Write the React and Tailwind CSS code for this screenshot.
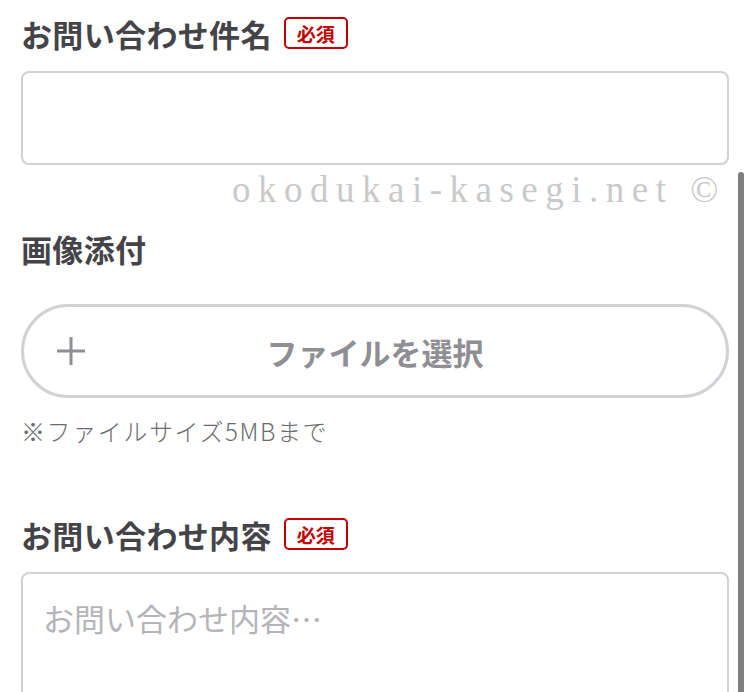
import React from 'react';

const jp = { fontFamily: '"Noto Sans CJK JP", "Noto Sans", sans-serif' };

function Required() {
  return (
    <span className="ml-[12px] flex h-[32px] w-[64px] items-center justify-center rounded-[5px] border-2 border-[#c40000] text-[19px] font-bold leading-none text-[#c40000]">
      必須
    </span>
  );
}

function Label({ children, required }) {
  return (
    <div className="flex h-[32px] items-center">
      <span className="text-[31px] font-bold leading-none tracking-[0.35px] text-[#444448]">{children}</span>
      {required && <Required />}
    </div>
  );
}

export default function App() {
  return (
    <div className="relative h-[692px] w-full overflow-hidden bg-white" style={jp}>
      <div className="flex flex-col pl-[21px] pr-[24px] pt-[17px]">
        {/* 件名 */}
        <Label required>お問い合わせ件名</Label>
        <input
          type="text"
          className="mt-[22px] h-[94px] w-full rounded-[8px] border-2 border-[#d1d1d6] bg-white outline-none"
        />

        {/* 画像添付 */}
        <div className="mt-[67px]">
          <Label>画像添付</Label>
        </div>
        <button className="relative mt-[40px] flex h-[94px] w-full items-center justify-center rounded-full border-[3px] border-[#d1d1d6] bg-white">
          <svg className="absolute left-[33px] top-1/2 -translate-y-1/2" width="28" height="28" viewBox="0 0 28 28">
            <path d="M14 0V28M0 14H28" stroke="#8e8e93" strokeWidth="3" fill="none" />
          </svg>
          <span className="text-[31px] font-bold leading-none text-[#8e8e93]">ファイルを選択</span>
        </button>
        <p className="mt-[20px] h-[26px] text-[24px] font-light leading-[26px] tracking-[1.6px] text-[#6c6c70]">※ファイルサイズ5MBまで</p>

        {/* 内容 */}
        <div className="mt-[74px]">
          <Label required>お問い合わせ内容</Label>
        </div>
        <textarea
          placeholder="お問い合わせ内容…"
          className="mt-[22px] h-[220px] w-full resize-none rounded-[8px] border-2 border-[#d1d1d6] bg-white px-[20px] pt-[24px] text-[31px] leading-[40px] outline-none placeholder:text-[#b4b4b9]"
          style={jp}
        />
      </div>

      {/* watermark */}
      <div
        className="pointer-events-none absolute left-[232px] top-[166px] text-[37px] leading-[48px] tracking-[7.5px] text-[#c9c9c9]"
        style={{ fontFamily: '"Liberation Serif", "DejaVu Serif", serif' }}
      >
        okodukai-kasegi.net ©
      </div>

      {/* scrollbar */}
      <div className="absolute right-[9px] top-[172px] h-[540px] w-[6px] rounded-full bg-[#7f7f7f]" />
    </div>
  );
}
